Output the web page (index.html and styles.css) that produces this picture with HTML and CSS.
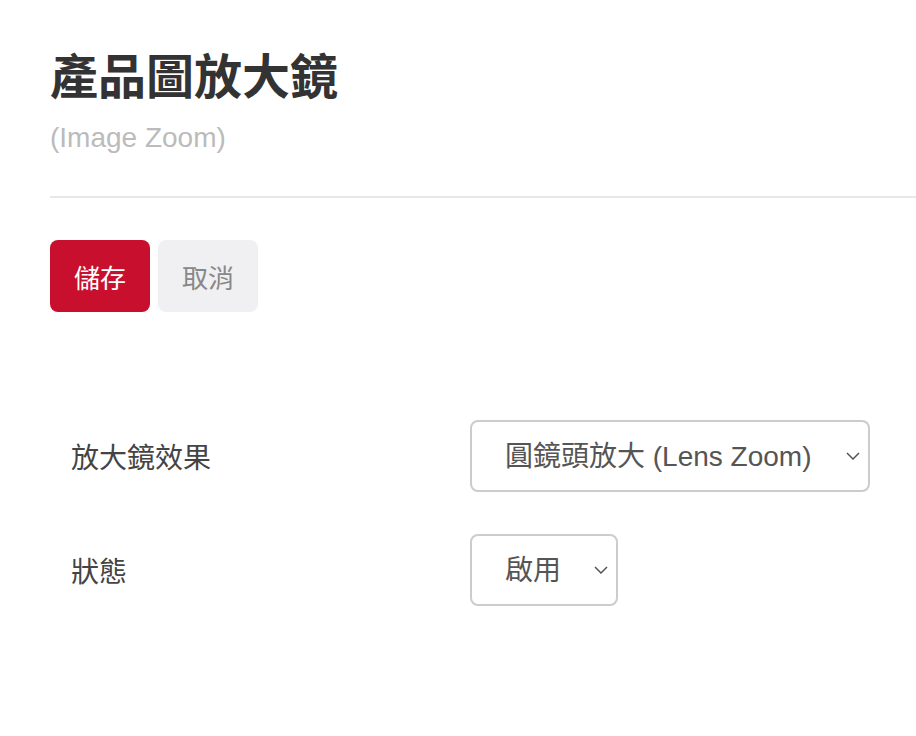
FILE: index.html
```html
<!DOCTYPE html>
<html lang="zh-Hant">
<head>
    <meta charset="UTF-8">
    <meta name="viewport" content="width=device-width, initial-scale=1.0">
    <title>產品圖放大鏡</title>
    <link rel="stylesheet" href="styles.css">
</head>
<body>
    <div class="page">
        <header class="page-header">
            <h1>產品圖放大鏡</h1>
            <p class="subtitle">(Image Zoom)</p>
        </header>

        <div class="actions">
            <button type="button" class="btn btn-primary">儲存</button>
            <button type="button" class="btn btn-light">取消</button>
        </div>

        <form class="settings">
            <label for="zoomType">放大鏡效果</label>
            <div class="select-wrap">
                <select id="zoomType" name="zoomType">
                    <option value="lens">圓鏡頭放大 (Lens Zoom)</option>
                    <option value="inner">內部放大 (Inner Zoom)</option>
                    <option value="window">視窗放大 (Window Zoom)</option>
                </select>
                <svg class="chevron" viewBox="0 0 14 8"><path d="M1 1l6 6 6-6" /></svg>
            </div>

            <label for="status">狀態</label>
            <div class="select-wrap">
                <select id="status" name="status">
                    <option value="1">啟用</option>
                    <option value="0">停用</option>
                </select>
                <svg class="chevron" viewBox="0 0 14 8"><path d="M1 1l6 6 6-6" /></svg>
            </div>
        </form>
    </div>
</body>
</html>
```

FILE: styles.css
```css
body {
    font-family: "Liberation Sans", "Noto Sans CJK TC", sans-serif;
    margin: 0;
    background-color: #fff;
    color: #444;
}

.page {
    padding: 0 0 0 50px;
}

.page-header {
    padding-top: 46px;
    padding-bottom: 40px;
    border-bottom: 2px solid #e8e8e8;
}

h1 {
    margin: 0;
    font-size: 48px;
    font-weight: 600;
    line-height: 64px;
    color: #333;
}

.subtitle {
    margin: 10px 0 0 0;
    font-size: 28px;
    line-height: 36px;
    color: #bbb;
}

.actions {
    display: flex;
    gap: 8px;
    margin-top: 42px;
}

.btn {
    font-family: inherit;
    font-size: 26px;
    height: 72px;
    width: 100px;
    border: none;
    border-radius: 8px;
    cursor: pointer;
}

.btn-primary {
    background-color: #c8102e;
    color: #fff;
}

.btn-light {
    background-color: #f0f0f2;
    color: #888;
}

.settings {
    display: grid;
    grid-template-columns: 420px auto;
    justify-content: start;
    align-items: center;
    row-gap: 42px;
    margin-top: 108px;
}

.settings label {
    padding-left: 21px;
    font-size: 28px;
    color: #444;
}

.select-wrap {
    position: relative;
    justify-self: start;
}

select {
    -webkit-appearance: none;
    appearance: none;
    font-family: inherit;
    font-size: 28px;
    color: #555;
    height: 72px;
    padding: 0 10px 0 33px;
    border: 2px solid #ccc;
    border-radius: 8px;
    background-color: #fff;
}

#zoomType {
    width: 400px;
}

#status {
    width: 148px;
}

.chevron {
    position: absolute;
    right: 10px;
    top: 32px;
    width: 14px;
    height: 8px;
    pointer-events: none;
}

.chevron path {
    fill: none;
    stroke: #555;
    stroke-width: 1.5;
}
```
